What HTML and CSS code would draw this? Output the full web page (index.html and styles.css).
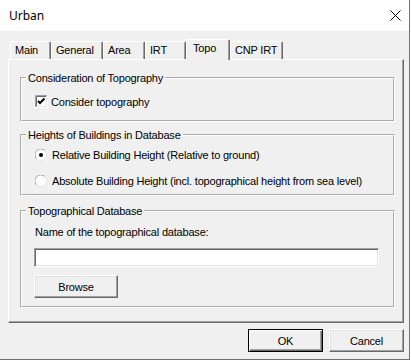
FILE: index.html
```html
<!DOCTYPE html>
<html lang="en">
<head>
    <meta charset="UTF-8">
    <meta name="viewport" content="width=device-width, initial-scale=1.0">
    <title>Urban</title>
    <link rel="stylesheet" href="styles.css">
</head>
<body>
    <div class="window">
        <div class="titlebar">
            <span class="title">Urban</span>
            <svg class="close" width="11" height="11" viewBox="0 0 11 11">
                <path d="M0.5 0.5 L10.5 10.5 M10.5 0.5 L0.5 10.5" stroke="#000" stroke-width="1"/>
            </svg>
        </div>
        <div class="content">
            <div class="tabs">
                <div class="tab t-main">Main</div>
                <div class="tab t-general">General</div>
                <div class="tab t-area">Area</div>
                <div class="tab t-irt">IRT</div>
                <div class="tab t-topo selected">Topo</div>
                <div class="tab t-cnp">CNP IRT</div>
            </div>
            <div class="panel">
                <fieldset class="group g-consider">
                    <legend>Consideration of Topography</legend>
                    <label class="row check-row">
                        <svg class="checkbox" width="13" height="13" viewBox="0 0 13 13">
                            <rect x="0" y="0" width="13" height="13" fill="#fff"/>
                            <path d="M0.5 12 V0.5 H12" stroke="#a0a0a0" fill="none"/>
                            <path d="M1.5 11 V1.5 H11" stroke="#696969" fill="none"/>
                            <path d="M1 11.5 H11.5 V1" stroke="#e3e3e3" fill="none"/>
                            <path d="M0 12.5 H12.5 V0" stroke="#fff" fill="none"/>
                            <path d="M3 6 L5 8 L9.5 3.5" stroke="#000" stroke-width="2" fill="none"/>
                        </svg>
                        <span>Consider topography</span>
                    </label>
                </fieldset>
                <fieldset class="group g-heights">
                    <legend>Heights of Buildings in Database</legend>
                    <label class="row radio-row first">
                        <svg class="radio" width="12" height="12" viewBox="0 0 12 12">
                            <circle cx="6" cy="6" r="5.5" fill="#fff"/>
                            <path d="M1.6 9.9 A5.5 5.5 0 0 1 9.9 1.6" stroke="#a0a0a0" fill="none"/>
                            <path d="M9.9 1.6 A5.5 5.5 0 0 1 1.6 9.9" stroke="#e3e3e3" fill="none"/>
                            <circle cx="6" cy="6" r="2" fill="#000"/>
                        </svg>
                        <span>Relative Building Height (Relative to ground)</span>
                    </label>
                    <label class="row radio-row">
                        <svg class="radio" width="12" height="12" viewBox="0 0 12 12">
                            <circle cx="6" cy="6" r="5.5" fill="#fff"/>
                            <path d="M1.6 9.9 A5.5 5.5 0 0 1 9.9 1.6" stroke="#a0a0a0" fill="none"/>
                            <path d="M9.9 1.6 A5.5 5.5 0 0 1 1.6 9.9" stroke="#e3e3e3" fill="none"/>
                        </svg>
                        <span>Absolute Building Height (incl. topographical height from sea level)</span>
                    </label>
                </fieldset>
                <fieldset class="group g-database">
                    <legend>Topographical Database</legend>
                    <div class="db-label">Name of the topographical database:</div>
                    <div class="db-input"></div>
                    <button class="btn browse">Browse</button>
                </fieldset>
            </div>
            <div class="footer">
                <button class="btn default">OK</button>
                <button class="btn">Cancel</button>
            </div>
        </div>
    </div>
</body>
</html>
```

FILE: styles.css
```css
* {
    box-sizing: border-box;
}
body {
    margin: 0;
    background: #fff;
    font-family: "Liberation Sans", Arial, sans-serif;
    font-size: 11px;
    letter-spacing: -0.2px;
    color: #000;
}
.window {
    width: 410px;
    height: 360px;
    background: #f0f0f0;
    border-right: 1px solid #707070;
    border-bottom: 1px solid #707070;
    display: flex;
    flex-direction: column;
}
.titlebar {
    height: 31px;
    background: #fff;
    display: flex;
    align-items: center;
    justify-content: space-between;
    padding: 0 8px 0 9px;
}
.title {
    font-family: "Noto Sans", sans-serif;
    font-size: 12px;
    letter-spacing: 0;
}
.content {
    flex: 1;
    padding: 8px 5px 0 8px;
}
.tabs {
    display: flex;
    align-items: flex-end;
    height: 20px;
    margin-left: 2px;
}
.tab {
    height: 18px;
    line-height: 17px;
    padding-left: 4px;
    border-top: 1px solid #fff;
    border-left: 1px solid #fff;
    border-right: 1px solid #696969;
    box-shadow: inset -1px 0 #a0a0a0;
    border-radius: 2px 2px 0 0;
    white-space: nowrap;
}
.t-main { width: 41px; }
.t-general { width: 52px; }
.t-area { width: 42px; }
.t-irt { width: 41px; }
.t-topo { width: 44px; }
.t-cnp { width: 53px; }
.tab.selected {
    height: 21px;
    line-height: 16px;
    padding-left: 6px;
    margin-bottom: -1px;
    background: #f0f0f0;
    position: relative;
    z-index: 1;
}
.panel {
    width: 396px;
    height: 264px;
    border: 1px solid;
    border-color: #fff #696969 #696969 #fff;
    box-shadow: inset -1px -1px #a0a0a0;
    padding: 11px 8px 0 11px;
}
.group {
    margin: 0;
    padding: 0;
    min-width: 0;
    border: 2px groove #fff;
}
.group legend {
    margin-left: 4px;
    padding: 0 2px;
    line-height: 14px;
}
.g-consider {
    padding-bottom: 12px;
}
.g-heights {
    margin-top: 6px;
    padding-bottom: 7px;
}
.g-database {
    margin-top: 8px;
    padding-bottom: 8px;
}
.row {
    display: flex;
    align-items: center;
    height: 13px;
    padding-left: 13px;
}
.check-row {
    margin-top: 10px;
    gap: 3px;
}
.radio-row {
    margin-top: 13px;
    gap: 5px;
}
.radio-row.first {
    margin-top: 6px;
}
.db-label {
    margin-top: 8px;
    margin-left: 13px;
    line-height: 13px;
}
.db-input {
    margin-top: 9px;
    margin-left: 12px;
    width: 345px;
    height: 19px;
    background: #fff;
    border-top: 1px solid #a0a0a0;
    border-left: 1px solid #a0a0a0;
    border-right: 1px solid #fff;
    border-bottom: 1px solid #fff;
    box-shadow: inset 1px 1px #696969, inset -1px -1px #e3e3e3;
}
.btn {
    display: block;
    width: 75px;
    height: 23px;
    padding: 0;
    font-family: "Liberation Sans", Arial, sans-serif;
    font-size: 11px;
    letter-spacing: -0.2px;
    color: #000;
    background: #f0f0f0;
    border: 1px solid;
    border-color: #fff #696969 #696969 #fff;
    box-shadow: inset -1px -1px #a0a0a0, inset 1px 1px #e3e3e3;
}
.browse {
    margin-top: 8px;
    margin-left: 12px;
    width: 84px;
}
.footer {
    display: flex;
    justify-content: flex-end;
    gap: 6px;
    margin-top: 6px;
}
.btn.default {
    border: 1px solid #000;
    box-shadow: inset 1px 1px #fff, inset -1px -1px #696969, inset -2px -2px #a0a0a0;
}
```
